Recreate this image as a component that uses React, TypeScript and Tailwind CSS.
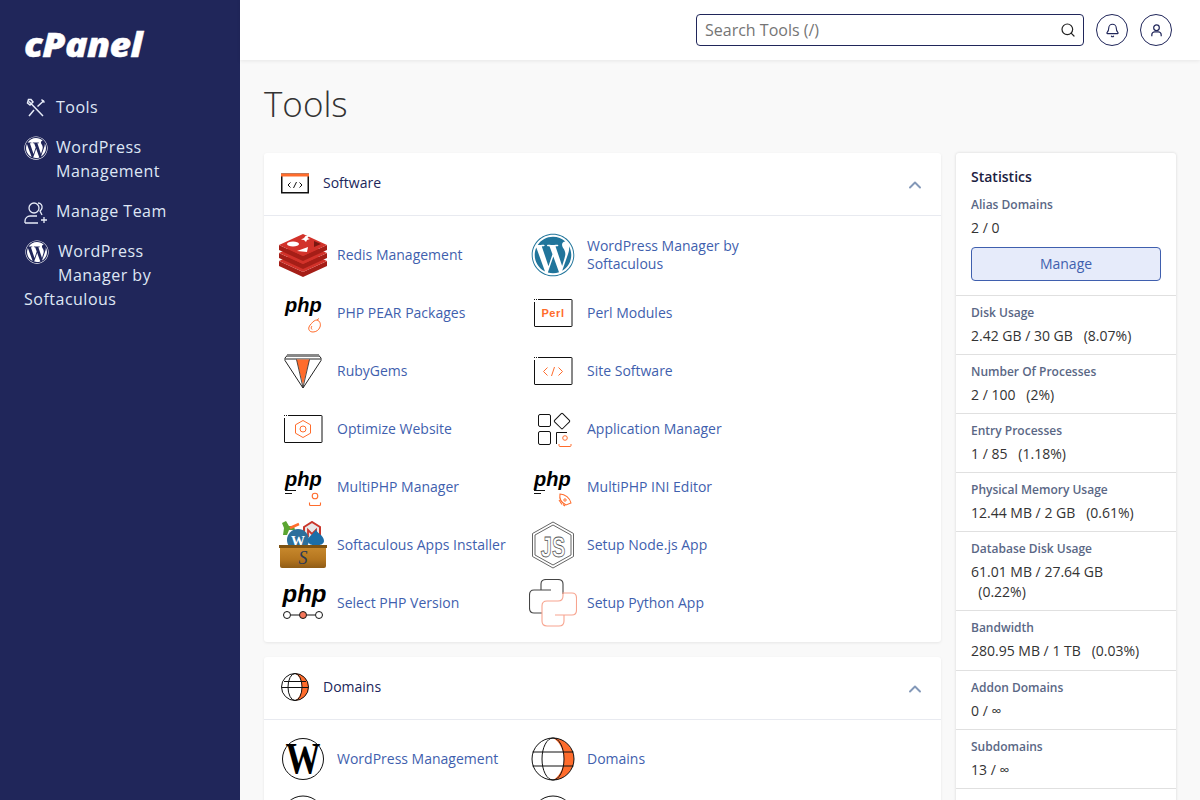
import { ReactNode } from "react";
import { Bell, ChevronUp, Search } from "lucide-react";
import { FaWordpress } from "react-icons/fa";

const ORANGE = "#ff6c2c";

function Box({ children, vb = "0 0 48 48" }: { children: ReactNode; vb?: string }) {
  return (
    <svg viewBox={vb} className="w-full h-full" fill="none">
      {children}
    </svg>
  );
}

function Screen({ children }: { children?: ReactNode }) {
  return (
    <>
      <path d="M9 10.500H42.500a.5.5 0 0 1 .5.5V37a.5.5 0 0 1-.5.5H6a.5.5 0 0 1-.5-.5V13" stroke="#111" strokeWidth="1" />
      <path d="M5 10.500H8" stroke="#111" strokeWidth="1" strokeDasharray="1 1" />
      {children}
    </>
  );
}

function PhpText({ x = 6, y = 23, size = 20 }: { x?: number; y?: number; size?: number }) {
  return (
    <text x={x} y={y} fontFamily="'Liberation Sans', sans-serif" fontWeight="700" fontStyle="italic" fontSize={size} fill="#000">
      php
    </text>
  );
}

function Redis() {
  return (
    <Box>
      {[16, 8, 0].map((o) => (
        <g key={o}>
          <polygon points={`0,${14 + o} 24,${25 + o} 48,${14 + o} 48,${19 + o} 24,${30 + o} 0,${19 + o}`} fill="#a51e17" />
          <polygon points={`0,${14 + o} 24,${3 + o} 48,${14 + o} 24,${25 + o}`} fill="#d2322a" />
        </g>
      ))}
      <ellipse cx="14" cy="13" rx="6" ry="2.600" fill="#fff" />
      <polygon points="25,7 26.500,5 30,5 28.500,7 31,8 28,9 27,11 25,9 22,8.500" fill="#fff" />
      <polygon points="18,20 29,16 28,21" fill="#fff" />
      <polygon points="35,10 42,13 35,16" fill="#7a1610" />
    </Box>
  );
}

function RubyGem() {
  return (
    <Box>
      <path d="M9 7.500H39L42 11V13.500L24 41L6 13.500V11Z" fill="#fff" stroke="#222" strokeWidth="1" strokeLinejoin="round" />
      <path d="M8 7H40V10H8Z" fill="#888" />
      <path d="M6.500 12H41.500" stroke="#222" strokeWidth="1" />
      <polygon points="17.500,12.500 30.500,12.500 24,38" fill={ORANGE} />
      <path d="M17.500 12.500L24 40.500L30.500 12.500" stroke="#222" strokeWidth=".8" />
    </Box>
  );
}

function Gear() {
  return (
    <Screen>
      <polygon points="24,15.500 31.500,19.800 31.500,28.200 24,32.500 16.500,28.200 16.500,19.800" stroke={ORANGE} strokeWidth="1" strokeLinejoin="round" />
      <circle cx="24" cy="24" r="3" stroke={ORANGE} strokeWidth="1" />
    </Screen>
  );
}

function PhpPear() {
  return (
    <Box>
      <PhpText />
      <path d="M38 31c3 1 4 4 3 7s-4 5-7 5-5-2-4-5c.5-1.500 1.500-2.500 2.500-3.500 1.500-2 3.500-3.500 5.500-3.500Z" stroke={ORANGE} strokeWidth="1" />
      <path d="M38 31l2-1.500M33 37c-1 1-1 2.500 0 3.500" stroke={ORANGE} strokeWidth="1" />
    </Box>
  );
}

function PhpUser() {
  return (
    <Box>
      <PhpText />
      <path d="M6 27.500H17M6 30.500H13" stroke="#111" strokeWidth="1" />
      <circle cx="36" cy="33" r="2.800" stroke={ORANGE} strokeWidth="1.100" />
      <path d="M30.500 39.500v2q0 1 1 1h9q1 0 1-1v-2" stroke={ORANGE} strokeWidth="1.100" />
    </Box>
  );
}

function PhpRocket() {
  return (
    <Box>
      <PhpText x={5} />
      <path d="M5 27.500H16M5 30.500H12" stroke="#111" strokeWidth="1" />
      <path d="M31 31C36 31 41 35 42 40L37 42C33 40 30 36 31 31Z" stroke={ORANGE} strokeWidth="1.100" />
      <path d="M30 37l3 4.500M34 41.500l2 1.500" stroke={ORANGE} strokeWidth="1.100" />
      <circle cx="36" cy="37" r="1.200" stroke={ORANGE} />
    </Box>
  );
}

function PhpVersion() {
  return (
    <Box>
      <PhpText x={3.500} y={23} size={24} />
      <path d="M12 36H20M28 36H36" stroke="#111" strokeWidth="1" />
      <circle cx="8" cy="36" r="3.500" fill="#fff" stroke="#111" strokeWidth="1" />
      <circle cx="24" cy="36" r="3.500" fill="#f4765a" stroke="#111" strokeWidth="1" />
      <circle cx="40" cy="36" r="3.500" fill="#fff" stroke="#111" strokeWidth="1" />
    </Box>
  );
}

function Perl() {
  return (
    <Screen>
      <text x="24" y="28" textAnchor="middle" fontFamily="'Liberation Sans', sans-serif" fontWeight="700" fontSize="11" letterSpacing=".6" fill={ORANGE}>
        Perl
      </text>
    </Screen>
  );
}

function SiteSoftware() {
  return (
    <Screen>
      <path d="M18.500 20.500L14.500 24.500L18.500 28.500" stroke={ORANGE} strokeWidth="1" />
      <path d="M25.500 20L22.500 29M29.500 20.500L33.500 24.500L29.500 28.500" stroke={ORANGE} strokeWidth="1" />
    </Screen>
  );
}

function AppManager() {
  return (
    <Box>
      <rect x="9.500" y="9.500" width="12" height="12" rx="1.500" stroke="#111" />
      <rect x="9.500" y="26.500" width="12" height="13" rx="1.500" stroke="#111" />
      <rect x="27.300" y="10.300" width="11.500" height="11.500" rx="1" transform="rotate(45 33 16)" stroke="#111" />
      <path d="M27.500 39V27.500H38" stroke="#111" />
      <circle cx="36" cy="33" r="2.300" stroke={ORANGE} />
      <path d="M30 39v1.500q0 1 1 1h10q1 0 1-1V39" stroke={ORANGE} />
    </Box>
  );
}

function NodeHex() {
  return (
    <Box>
      <polygon points="24,1 44.500,12.500 44.500,35.500 24,47 3.500,35.500 3.500,12.500" stroke="#666" strokeWidth="1" />
      <polygon points="24,4 42,14 42,34 24,44 6,34 6,14" stroke="#666" strokeWidth="1" />
      <text transform="translate(24 36) scale(1 1.500)" textAnchor="middle" fontFamily="'Liberation Sans', sans-serif" fontWeight="700" fontSize="20" fill="#fff" stroke="#555" strokeWidth=".6">
        JS
      </text>
    </Box>
  );
}

function Python() {
  return (
    <Box>
      <path d="M22 11H12V5Q12 .5 17 .5H29Q34 .5 34 5V15M12 11H5Q.5 11 .5 16V29Q.5 34 5 34H13" stroke="#444" strokeWidth="1.100" />
      <path d="M13 34V27Q13 22 18 22H29Q34 22 34 17V14H43Q47.500 14 47.500 19V31Q47.500 36 43 36H35V42Q35 47 30 47H18Q13 47 13 42V34M26 36H35" stroke="#f7a48f" strokeWidth="1.100" />
    </Box>
  );
}

function Globe() {
  return (
    <Box>
      <circle cx="24" cy="24" r="21" fill="#fff" />
      <path d="M24 3A21 21 0 0 1 24 45C30 42 35 33 35 24S30 6 24 3Z" fill={ORANGE} />
      <circle cx="24" cy="24" r="21" stroke="#111" strokeWidth="1" />
      <ellipse cx="24" cy="24" rx="11" ry="21" stroke="#111" strokeWidth="1" />
      <path d="M3.500 17H44.500M3.500 31H44.500" stroke="#111" strokeWidth="1" />
    </Box>
  );
}

function OutlineCircle() {
  return (
    <Box>
      <circle cx="24" cy="24" r="21" stroke="#111" strokeWidth="1" />
    </Box>
  );
}

function WpBlack() {
  return (
    <Box>
      <circle cx="24" cy="24" r="20.500" stroke="#111" strokeWidth="1" />
      <text transform="translate(24 37.500) scale(.92 1.150)" textAnchor="middle" fontFamily="'Liberation Serif', serif" fontWeight="700" fontSize="38" fill="#000">
        W
      </text>
    </Box>
  );
}

function SoftaculousBox() {
  return (
    <Box>
      <linearGradient id="soft-box" x1="0" y1="0" x2="0" y2="1">
        <stop offset="0" stopColor="#c98a2e" />
        <stop offset=".6" stopColor="#b5761f" />
        <stop offset="1" stopColor="#8f5c16" />
      </linearGradient>
      <path d="M3 2L7 0L10 5L15 5L16 9L10 9L8 14L4 14L5 7Z" fill="#5aa531" />
      <path d="M11 7L20 3" stroke={ORANGE} strokeWidth="2.500" />
      <path d="M25 6L33 1L41 6V20H25Z" fill="#e8e8e8" stroke="#c9372c" strokeWidth="2" />
      <path d="M29 16V9L33 13L37 9V16" stroke="#c9372c" strokeWidth="1.800" />
      <circle cx="19" cy="19" r="11" fill="#2c6f9b" />
      <text x="19" y="25" textAnchor="middle" fontFamily="'Liberation Serif', serif" fontWeight="700" fontSize="14" fill="#fff">
        W
      </text>
      <path d="M37 8C37 12 45 14 45 20C45 26 29 26 29 20C29 15 36 12 37 8Z" fill="#1c6ea8" />
      <path d="M1 25H47V45Q47 47 45 47H3Q1 47 1 45Z" fill="url(#soft-box)" />
      <path d="M0 24H48V27H0Z" fill="#7d5212" />
      <text x="24" y="43" textAnchor="middle" fontFamily="'Liberation Serif', serif" fontStyle="italic" fontSize="18" fill="#2b3a55">
        S
      </text>
    </Box>
  );
}

function WpBlue() {
  return <FaWordpress className="w-[44px] h-[44px] text-[#21759b]" />;
}

function CodeWindow() {
  return (
    <Box vb="0 0 28 28">
      <rect x=".75" y="5.250" width="26.500" height="18.500" stroke="#111" strokeWidth="1.500" />
      <rect x="0" y="4.500" width="28" height="3" fill={ORANGE} />
      <path d="M9.500 13.500L7 16L9.500 18.500M15.500 13L12.500 19M18.500 13.500L21 16L18.500 18.500" stroke="#111" strokeWidth="1" />
    </Box>
  );
}

function HeadGlobe() {
  return (
    <Box vb="0 0 28 28">
      <circle cx="14" cy="14" r="13.500" fill="#fff" />
      <path d="M14 .5A13.500 13.500 0 0 1 14 27.500C18 25.500 21 20 21 14S18 2.500 14 .5Z" fill={ORANGE} />
      <circle cx="14" cy="14" r="13.500" stroke="#111" strokeWidth="1" />
      <ellipse cx="14" cy="14" rx="7" ry="13.500" stroke="#111" strokeWidth="1" />
      <path d="M1 14.500H27M3 8.500H25" stroke="#111" strokeWidth="1" />
    </Box>
  );
}

type Tool = { name: string; icon: ReactNode };

const software: Tool[] = [
  { name: "Redis Management", icon: <Redis /> },
  { name: "WordPress Manager by Softaculous", icon: <WpBlue /> },
  { name: "PHP PEAR Packages", icon: <PhpPear /> },
  { name: "Perl Modules", icon: <Box><Perl /></Box> },
  { name: "RubyGems", icon: <RubyGem /> },
  { name: "Site Software", icon: <Box><SiteSoftware /></Box> },
  { name: "Optimize Website", icon: <Box><Gear /></Box> },
  { name: "Application Manager", icon: <AppManager /> },
  { name: "MultiPHP Manager", icon: <PhpUser /> },
  { name: "MultiPHP INI Editor", icon: <PhpRocket /> },
  { name: "Softaculous Apps Installer", icon: <SoftaculousBox /> },
  { name: "Setup Node.js App", icon: <NodeHex /> },
  { name: "Select PHP Version", icon: <PhpVersion /> },
  { name: "Setup Python App", icon: <Python /> },
];

const domains: Tool[] = [
  { name: "WordPress Management", icon: <WpBlack /> },
  { name: "Domains", icon: <Globe /> },
  { name: "", icon: <OutlineCircle /> },
  { name: "", icon: <OutlineCircle /> },
];

const stats = [
  { label: "Disk Usage", value: "2.42 GB / 30 GB \u00a0\u00a0(8.07%)", pad: "pb-[8px]" },
  { label: "Number Of Processes", value: "2 / 100 \u00a0\u00a0(2%)", pad: "pb-[8px]" },
  { label: "Entry Processes", value: "1 / 85 \u00a0\u00a0(1.18%)", pad: "pb-[8px]" },
  { label: "Physical Memory Usage", value: "12.44 MB / 2 GB \u00a0\u00a0(0.61%)", pad: "pb-[8px]" },
  { label: "Database Disk Usage", value: "61.01 MB / 27.64 GB \u00a0\u00a0(0.22%)", pad: "pb-[8px]" },
  { label: "Bandwidth", value: "280.95 MB / 1 TB \u00a0\u00a0(0.03%)", pad: "pb-[9px]" },
  { label: "Addon Domains", value: "0 / ∞", pad: "pb-[8px]" },
  { label: "Subdomains", value: "13 / ∞", pad: "pb-[8px]" },
];

function ToolCard({ title, icon, tools }: { title: string; icon: ReactNode; tools: Tool[] }) {
  return (
    <section className="bg-white rounded-[3px] shadow-[0_1px_3px_rgba(0,0,0,0.08)]">
      <div className="h-[63px] flex items-center border-b border-[#e8eaf0] pl-[17px] pr-[16px] pb-[3px]">
        <div className="w-[28px] h-[28px] flex items-center mr-[14px]">{icon}</div>
        <h2 className="flex-1 text-sm text-[#20265a]">{title}</h2>
        <ChevronUp className="w-[20px] h-[20px] text-[#8398b8] mt-[4px]" strokeWidth={2.300} />
      </div>
      <div className="grid grid-cols-[250px_250px] pl-[15px] py-[10px]">
        {tools.map((t, i) => (
          <a key={i} className="h-[58px] flex items-center gap-[10px] text-sm leading-[18px] text-[#3f5fae]">
            <span className="w-[48px] h-[48px] shrink-0 flex items-center justify-center">{t.icon}</span>
            <span className="w-[170px]">{t.name}</span>
          </a>
        ))}
      </div>
    </section>
  );
}

function NavItem({ icon, shift, single, children }: { icon: ReactNode; shift?: boolean; single?: boolean; children: ReactNode }) {
  return (
    <a className={`block text-base leading-6 tracking-[0.5px] text-[#dfe6f5] ${single ? "h-6" : ""}`}>
      <span className={`float-left h-[30px] flex items-start pt-px ${shift ? "w-[34px] pl-px" : "w-[32px]"}`}>{icon}</span>
      {children}
    </a>
  );
}

export default function App() {
  return (
    <div className="flex h-screen overflow-hidden bg-[#f9f9f9] font-['Open_Sans',sans-serif]">
      <aside className="w-[240px] shrink-0 bg-[#20265a] px-[24px]">
        <div className="h-[95px] pt-[25px] text-white italic font-extrabold text-[33px] leading-[40px] tracking-[-0.5px]">
          <span className="inline-block origin-left scale-x-[1.13] [-webkit-text-stroke:0.4px_white]">cPanel</span>
        </div>
        <nav className="flex flex-col gap-[16px]">
          <NavItem
            single
            icon={
              <svg viewBox="0 0 24 24" className="w-[24px] h-[24px]" fill="none" stroke="#e6ebf7" strokeWidth="1.500">
                <path d="M5 5.500L19 20M4.500 3.500L3.500 7L6 9L9 6L7 3.500Z" />
                <path d="M20 4.500L13.500 10.500M10 14L5 20" />
                <path d="M17.500 3.500L20.500 6.500" />
              </svg>
            }
          >
            Tools
          </NavItem>
          <NavItem icon={<FaWordpress className="w-[24px] h-[24px] text-white" />}>
            WordPress Management
          </NavItem>
          <NavItem
            single
            icon={
              <svg viewBox="0 0 24 24" className="w-[24px] h-[24px]" fill="none" stroke="#e6ebf7" strokeWidth="1.300">
                <circle cx="10" cy="8" r="5" />
                <path d="M1 23v-2c0-3 2.500-5 5-5h7M1 23h13" />
                <path d="M14 3c3 0 4.500 2.500 4 5-.3 1.500-1 2.500-2 3l2 4" />
                <path d="M20 17v6M17 20h6" />
              </svg>
            }
          >
            Manage Team
          </NavItem>
          <NavItem shift icon={<FaWordpress className="w-[24px] h-[24px] text-white" />}>
            WordPress Manager by Softaculous
          </NavItem>
        </nav>
      </aside>

      <div className="flex-1 min-w-0">
        <header className="h-[60px] bg-white shadow-[0_1px_4px_rgba(0,0,0,0.08)] flex items-center justify-end gap-[12px] pr-[28px]">
          <div className="w-[388px] h-[32px] border border-[#20265a] rounded-[4px] flex items-center pl-[8px] pr-[7px]">
            <span className="flex-1 text-base text-[#757575]">Search Tools (/)</span>
            <Search className="w-[16px] h-[16px] text-[#222]" strokeWidth={1.800} />
          </div>
          <button className="w-[32px] h-[32px] rounded-full border border-[#20265a] flex items-center justify-center">
            <Bell className="w-[15px] h-[15px] text-[#20265a]" strokeWidth={1.800} />
          </button>
          <button className="w-[32px] h-[32px] rounded-full border border-[#20265a] flex items-center justify-center">
            <svg viewBox="0 0 16 16" className="w-[15px] h-[15px]" fill="none" stroke="#20265a" strokeWidth="1.300">
              <circle cx="8" cy="5" r="3" />
              <path d="M3 14v-1.500C3 11 4.500 9.500 6 9.500h4c1.500 0 3 1.500 3 3V14" />
            </svg>
          </button>
        </header>

        <main className="px-[24px]">
          <h1 className="h-[93px] pt-[20px] text-[35px] leading-[48px] font-light text-[#333]">Tools</h1>
          <div className="flex gap-[15px] items-start">
            <div className="w-[677px] flex flex-col gap-[15px]">
              <ToolCard title="Software" icon={<CodeWindow />} tools={software} />
              <ToolCard title="Domains" icon={<HeadGlobe />} tools={domains} />
            </div>

            <aside className="w-[220px] bg-white rounded-[3px] shadow-[0_0_3px_rgba(0,0,0,0.15)]">
              <div className="px-[15px] pt-[14px] pb-[14px] border-b border-[#e0e0e0]">
                <h2 className="text-sm leading-5 font-semibold text-[#1b2040]">Statistics</h2>
                <p className="mt-[10px] text-xs leading-4 font-semibold text-[#5a6785]">Alias Domains</p>
                <p className="mt-[5px] text-sm leading-5 text-[#333]">2 / 0</p>
                <button className="mt-[9px] w-full h-[34px] rounded-[4px] border border-[#3f5fae] bg-[#e6ebfa] text-sm text-[#3f5fae]">Manage</button>
              </div>
              {stats.map((s) => (
                <div key={s.label} className={`px-[15px] pt-[9px] border-b border-[#e0e0e0] ${s.pad}`}>
                  <p className="text-xs leading-4 font-semibold text-[#5a6785]">{s.label}</p>
                  <p className="mt-[5px] text-sm leading-5 text-[#333]">{s.value}</p>
                </div>
              ))}
              <div className="h-[40px]" />
            </aside>
          </div>
        </main>
      </div>
    </div>
  );
}
